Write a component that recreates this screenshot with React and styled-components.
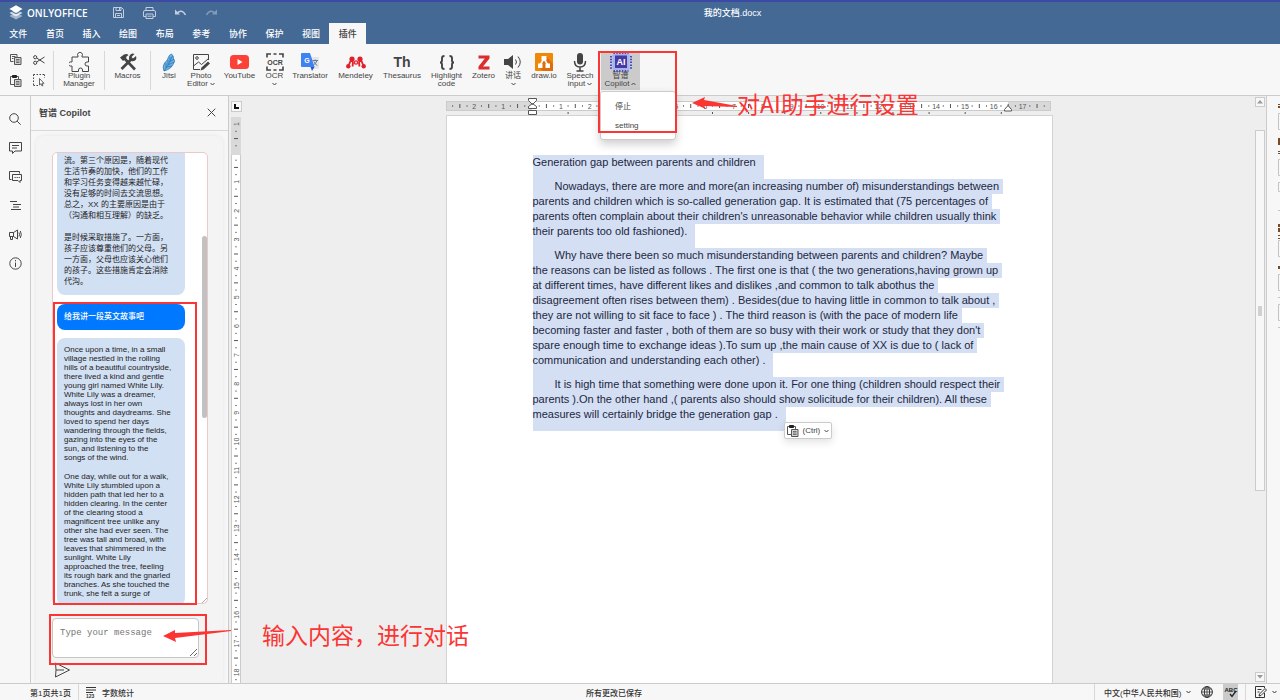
import styled, { createGlobalStyle, css } from "styled-components";

const theme = {
  header: "#446995",
  bar: "#f7f7f7",
  canvas: "#eeeeee",
  border: "#cbcbcb",
  text: "#444444",
  bubble: "#d2e0f4",
  primary: "#0078ff",
  selection: "#d4dff4",
  mark: "#fb3434",
  sans: '"Liberation Sans", "Noto Sans CJK SC", sans-serif',
  cjk: '"Noto Sans CJK SC", sans-serif',
};

const GlobalStyle = createGlobalStyle`
  * {
    box-sizing: border-box;
  }

  body {
    margin: 0;
    font-family: ${theme.sans};
    color: ${theme.text};
    background: ${theme.canvas};
  }

  button {
    font: inherit;
    color: inherit;
    border: 0;
    padding: 0;
    background: none;
    cursor: pointer;
  }

  svg {
    display: block;
    flex: none;
  }
`;

const StyledApp = styled.div`
  position: relative;
  display: flex;
  flex-direction: column;
  height: 100vh;
  overflow: hidden;
`;

/* ---------- header ---------- */

const StyledHeader = styled.header`
  background: ${theme.header};
  border-top: 2px solid #3c4aa6;
  color: #fff;
  font-size: 9px;
  font-weight: 500;
`;

const StyledTitleRow = styled.div`
  display: flex;
  align-items: center;
  height: 21px;
  padding-left: 9px;
`;

const StyledBrand = styled.a`
  display: flex;
  align-items: center;
  gap: 4px;
  width: 94px;
  color: #fff;
  text-decoration: none;
  font-family: "Open Sans", sans-serif;
  font-size: 10px;
  font-weight: 600;
`;

const StyledQuickActions = styled.div`
  display: flex;
  width: 124px;
  color: #c3cfde;

  button {
    display: grid;
    place-items: center;
    width: 31px;
    height: 20px;
  }
`;

const StyledDocName = styled.h1`
  flex: 1;
  margin: 0;
  padding-right: 42px;
  text-align: center;
  font-size: 9px;
  font-weight: 500;
`;

const StyledTabs = styled.nav`
  display: grid;
  grid-template-columns: repeat(10, 1fr);
  width: 366px;
  height: 21px;
`;

const StyledTab = styled.button`
  text-align: center;
  font-size: 9px;
  line-height: 20px;
  font-weight: 500;

  ${({ $active }) =>
    $active &&
    css`
      color: ${theme.text};
      background: ${theme.bar};
    `}
`;

/* ---------- toolbar ---------- */

const StyledToolbar = styled.div`
  display: flex;
  height: 52px;
  background: ${theme.bar};
  border-bottom: 1px solid ${theme.border};
`;

const StyledClipboard = styled.div`
  display: grid;
  grid-template-columns: 23px 23px;
  grid-template-rows: 21px 21px;
  padding: 5px 3px 0 4px;

  button {
    display: grid;
    place-items: center;
  }
`;

const StyledDivider = styled.i`
  width: 1px;
  height: 39px;
  margin-top: 7px;
  background: #d8d8d8;
`;

const StyledTool = styled.button`
  display: flex;
  flex-direction: column;
  align-items: center;
  width: ${({ $width }) => $width}px;
  height: 38px;
  margin-top: 8px;
  font-size: 8px;
  line-height: 8px;
  white-space: nowrap;
  background: ${({ $open }) => ($open ? "#cbcbcb" : "none")};

  .label {
    display: flex;
    align-items: center;
    gap: 2px;
    height: 8px;
  }
`;

const StyledToolIcon = styled.span`
  display: grid;
  place-items: center;
  height: 20px;
  font-size: 14px;
  font-weight: 700;
`;

const StyledMenuAnchor = styled.div`
  position: relative;
  margin-left: 5px;
`;

const StyledMenu = styled.div`
  position: absolute;
  z-index: 2;
  top: 47px;
  left: -1px;
  display: flex;
  flex-direction: column;
  width: 76px;
  padding: 3px 0 4px;
  background: #fff;
  border: 1px solid ${theme.border};
  border-radius: 3px;
  box-shadow: 0 4px 10px rgba(0, 0, 0, 0.2);

  button {
    height: 20px;
    padding-left: 14px;
    text-align: left;
    font-size: 8px;
  }
`;

/* ---------- body ---------- */

const StyledBody = styled.main`
  display: flex;
  flex: 1;
  min-height: 0;
`;

const StyledRail = styled.aside`
  display: flex;
  flex-direction: column;
  width: 31px;
  padding-top: 8px;
  background: ${theme.bar};
  border-right: 1px solid ${theme.border};

  button {
    display: grid;
    place-items: center;
    height: 29px;
  }
`;

const StyledPanel = styled.section`
  display: flex;
  flex-direction: column;
  width: 198px;
  background: ${theme.bar};
  border-right: 1px solid ${theme.border};
`;

const StyledPanelHeader = styled.div`
  display: flex;
  align-items: center;
  justify-content: space-between;
  height: 35px;
  padding: 0 12px 1px 8px;
  border-bottom: 1px solid #d8d8d8;

  h2 {
    margin: 0;
    font-size: 9px;
    font-weight: 700;
  }
`;

const StyledCard = styled.div`
  flex: 1;
  min-height: 0;
  margin: 5px 5px 0;
  padding: 16px 15px 0 16px;
  background: #f4f4f4;
  border-radius: 8px 8px 0 0;
  box-shadow: 0 0 4px rgba(0, 0, 0, 0.08);
`;

const StyledChat = styled.div`
  display: flex;
  height: 452px;
  background: #fff;
  border: 1px solid #ecc9c9;
  border-radius: 5px;
  overflow: hidden;
`;

const StyledMessages = styled.div`
  display: flex;
  flex: 1;
  flex-direction: column;
  align-items: flex-start;
  gap: 8px;
  padding-left: 4px;
  overflow: hidden;
`;

const StyledBubble = styled.div`
  flex: none;
  width: 128px;
  padding: 7px 0 8px 7px;
  border-radius: 8px;
  background: ${theme.bubble};
  color: #222;
  font-size: 8px;
  line-height: 9px;
  white-space: pre;

  p {
    margin: 0;
  }

  p + p {
    margin-top: 10px;
  }

  ${({ $variant }) =>
    $variant === "chinese" &&
    css`
      padding-top: 2px;
      margin-bottom: 1px;
      border-radius: 0 0 8px 8px;
      line-height: 11px;

      p + p {
        margin-top: 11px;
      }
    `}

  ${({ $variant }) =>
    $variant === "user" &&
    css`
      background: ${theme.primary};
      color: #fff;
      font-weight: 500;
      line-height: 11px;
    `}
`;

const StyledScrollTrack = styled.div`
  display: flex;
  flex-direction: column;
  justify-content: space-between;
  align-items: flex-end;
  width: 6px;
  padding-top: 83px;

  i {
    width: 5px;
    height: 182px;
    border-radius: 3px;
    background: #c1c1c1;
  }
`;

const StyledMessageBox = styled.textarea`
  display: block;
  width: 147px;
  height: 40px;
  margin-top: 14px;
  padding: 8px 7px;
  border: 1px solid #c6c6c6;
  border-radius: 4px;
  background: #fff;
  font-family: "Liberation Mono", monospace;
  font-size: 9px;
  line-height: 12px;

  &::placeholder {
    color: #757575;
  }
`;

const StyledSend = styled.button`
  display: block;
  margin: 4px 0 0 2px;
`;

/* ---------- document ---------- */

const StyledVerticalRuler = styled.div`
  display: flex;
  flex-direction: column;
  align-items: center;
  gap: 5px;
  width: 14px;
  padding-top: 5px;
  overflow: hidden;
`;

const StyledTabStop = styled.button`
  display: grid;
  flex: none;
  place-items: center;
  width: 11px;
  height: 11px;
  border: 1px solid ${theme.border};
  background: ${theme.bar};
`;

const StyledWorkspace = styled.div`
  display: flex;
  flex: 1;
  flex-direction: column;
  align-items: center;
  min-width: 0;
  padding: 4px 0 0;
`;

const StyledRulerSvg = styled.svg`
  overflow: visible;
`;

const StyledPage = styled.article`
  flex: 1;
  width: 607px;
  padding: 39px 0 0 86px;
  background: #fff;
  border: 1px solid #d3d3d3;
  border-bottom: 0;
`;

const StyledParagraph = styled.p`
  margin: 0;
  color: #1c2740;
  font-size: 11px;
  line-height: 15px;
  white-space: pre;
`;

const StyledLine = styled.span`
  display: block;
  width: fit-content;
  padding-right: 4px;
  background: ${theme.selection};

  &:first-child {
    padding-left: ${({ $indent }) => ($indent ? 22 : 0)}px;
  }

  &:last-child {
    padding-right: 8px;
    padding-bottom: 9px;
  }
`;

const StyledPasteAnchor = styled.div`
  position: relative;
`;

const StyledPaste = styled.button`
  position: absolute;
  top: -9px;
  left: 251px;
  display: flex;
  align-items: center;
  gap: 4px;
  height: 17px;
  padding: 0 2px;
  border: 1px solid ${theme.border};
  border-radius: 2px;
  background: #fff;
  box-shadow: 0 3px 8px rgba(0, 0, 0, 0.12);
  font-size: 8px;
`;

const StyledScroll = styled.div`
  display: flex;
  flex-direction: column;
  justify-content: space-between;
  width: 12px;
  padding: 1px 1px 1px 0;
  border-right: 1px solid ${theme.border};

  button {
    display: grid;
    place-items: center;
    width: 10px;
    height: 10px;
    border: 1px solid ${theme.border};
    background: ${theme.bar};
  }
`;

const StyledThumb = styled.div`
  display: grid;
  place-items: center;
  flex: 0 0 361px;
  width: 10px;
  margin: 23px 0 auto;
  border: 1px solid ${theme.border};
  background: ${theme.bar};

  i {
    width: 4px;
    height: 10px;
    background: #d0d0d0;
  }
`;

const StyledSettings = styled.aside`
  width: 13px;
  background: ${theme.bar};
  overflow: hidden;
`;

/* ---------- status bar ---------- */

const StyledStatus = styled.footer`
  display: flex;
  align-items: center;
  height: 17px;
  padding-left: 30px;
  background: ${theme.bar};
  border-top: 1px solid ${theme.border};
  font-size: 8px;
  font-weight: 500;
  color: #333;

  .saved {
    flex: 1;
    padding-right: 36px;
    text-align: center;
  }
`;

const StyledStatusItem = styled.button`
  display: flex;
  align-items: center;
  justify-content: ${({ $center }) => ($center ? "center" : "flex-start")};
  gap: 5px;
  width: ${({ $width }) => $width}px;
  height: 16px;
  margin-left: ${({ $before }) => $before || 0}px;
  padding-left: ${({ $pad }) => $pad || 0}px;
  border-left: ${({ $line }) => ($line ? "1px solid #d8d8d8" : 0)};
  background: ${({ $on }) => ($on ? "#cbcbcb" : "none")};
`;

/* ---------- callouts ---------- */

const StyledFrame = styled.div`
  position: absolute;
  z-index: 3;
  top: ${({ $top }) => $top}px;
  left: ${({ $left }) => $left}px;
  width: ${({ $width }) => $width}px;
  height: ${({ $height }) => $height}px;
  border: 2px solid ${theme.mark};
  pointer-events: none;
`;

const StyledNote = styled.div`
  position: absolute;
  z-index: 3;
  top: ${({ $top }) => $top}px;
  left: ${({ $left }) => $left}px;
  display: flex;
  align-items: center;
  gap: ${({ $gap }) => $gap || 0}px;
  color: ${theme.mark};
  font-family: ${theme.cjk};
  font-size: 23px;
  line-height: 30px;
  white-space: nowrap;
  pointer-events: none;
`;

/* ---------- icons ---------- */

const Icon = ({ w = 12, h = w, children, ...rest }) => (
  <svg
    width={w}
    height={h}
    viewBox={`0 0 ${w} ${h}`}
    fill="none"
    stroke="currentColor"
    aria-hidden="true"
    {...rest}
  >
    {children}
  </svg>
);

const Chevron = ({ up }) => (
  <Icon w={5} h={4}>
    <path d={up ? "M.5 3l2-2 2 2" : "M.5 1l2 2 2-2"} />
  </Icon>
);

const LogoIcon = () => (
  <Icon w={14} h={15} stroke="none" fill="#fff">
    <path d="M7 7.6 13.6 11 7 14.6.4 11z" opacity=".5" />
    <path d="M7 4.6 13.6 8 7 11.4.4 8z" opacity=".75" />
    <path d="M7 .3 13.6 3.9 7 7.8.4 3.9z" />
    <path d="M.4 4.6 7 8.3l6.6-3.7v.8L7 9.2.4 5.4z" fill={theme.header} />
  </Icon>
);

const SaveIcon = () => (
  <Icon w={11}>
    <path d="M.5.5h8l2 2v8H.5zM3 .5v3h5v-3M6.5 1v2M2.5 10.5v-4h6v4M4 8.500h3" />
  </Icon>
);

const PrintIcon = () => (
  <Icon w={13} h={12}>
    <path d="M3 3.500v-3h7v3M3 9.500H.500V5q0-1.500 1.500-1.500h9q1.500 0 1.500 1.500v4.500H10M3 7h7v4.500H3zM4.500 9.200h4" />
  </Icon>
);

const UndoIcon = ({ flip }) => (
  <Icon w={11} h={7} transform={flip ? "scale(-1 1)" : undefined} opacity={flip ? 0.5 : 1}>
    <path d="M2 4Q7-.5 10.500 6" strokeWidth="1.5" />
    <path d="M0 .5v5h5z" fill="currentColor" stroke="none" />
  </Icon>
);

const CopyIcon = () => (
  <Icon w={12} h={11} stroke="#555">
    <path d="M3.500 7.500h-3v-7h6.500V3M2 2.500h3.500M2 4.500h1.500" />
    <path d="M4.500 3.500H11v7H4.500z" fill="#d4d4d4" />
    <path d="M6 5.500h3.500M6 7h3.500M6 8.500h3.500" strokeWidth=".8" />
  </Icon>
);

const PasteIcon = () => (
  <Icon w={12} stroke="#555">
    <path d="M4 9.500H.5v-8h8V4" />
    <path d="M2.500.5h4v2h-4z" fill="#222" stroke="#222" />
    <path d="M4.500 4.500H11v7H4.500z" fill="#d4d4d4" />
    <path d="M6 6.500h3.500M6 8h3.500M6 9.500h3.500" strokeWidth=".8" />
  </Icon>
);

const CutIcon = () => (
  <Icon w={12} h={10}>
    <circle cx="2.200" cy="2.200" r="1.600" />
    <circle cx="2.200" cy="7.800" r="1.600" />
    <path d="M3.600 3 11.500 8M3.600 7 11.500 2" />
  </Icon>
);

const SelectIcon = () => (
  <Icon w={12} h={13}>
    <path d="M.5.5h11M.5.5v11M11.500.5V4M.5 11.500H5" strokeDasharray="1.500 1.500" />
    <path d="M6.500 4.500v6.500l1.500-1.300 1 2.300 1-.500-1-2.200H11z" fill="#fff" stroke="#444" strokeWidth=".8" />
  </Icon>
);

const PuzzleIcon = () => (
  <Icon w={20}>
    <path d="M3 5h6V4a2.400 2.400 0 1 1 4 0v1h6.500v5H18a2 2 0 1 0 0 4h1.500v5.500h-6V18a2 2 0 1 0-4 0v1.500H3V14h-.8a2.100 2.100 0 1 1 0-4H3z" />
  </Icon>
);

const MacrosIcon = () => (
  <Icon w={18}>
    <path d="M5.500 5.500 16 16.500" strokeWidth="2.600" />
    <path d="M2.500 16 12 6.500" strokeWidth="2.600" />
    <path d="M1 4.500l4-3q3-1 4.500.5l-2 1.500L7 5.500 4 8z" fill="currentColor" stroke="none" />
    <path d="M15.500 1l-3 3L14 5.500 17 3q1 3-1 4.500-2 1.300-4 .2L10 6q-.5-3 1.500-4.500t4-.5z" fill="currentColor" stroke="none" />
  </Icon>
);

const JitsiIcon = () => (
  <Icon w={14} h={19} stroke="#1d6fae" strokeWidth=".7">
    <path d="M9.500 1Q12 3 11.500 5.500 14 8 11 11.500 9 16 2 18q-2-4 .5-8Q6 7 6.500 4 7 2 9.500 1z" fill="#6fb2e4" />
    <path d="M2 18Q7 12 10.500 3M4 15v-5M6 12V7M8 9V4M5 14l5-1M7 11.500l5-2.500M9 8l3-2" />
  </Icon>
);

const PhotoIcon = () => (
  <Icon w={18}>
    <path d="M8 16.500H1.500v-15h15V7M1.500 13l5-4 3 2.500L16 6" />
    <circle cx="5" cy="5" r="1.300" />
    <path d="M16 8.500l2 2-6.500 6-3 1 1-3z" fill="currentColor" stroke="none" />
  </Icon>
);

const YoutubeIcon = () => (
  <Icon w={19} h={14} stroke="none">
    <rect width="19" height="14" rx="3.500" fill="#fc4237" />
    <path d="M7.500 4v6l5-3z" fill="#fff" />
  </Icon>
);

const OcrIcon = () => (
  <Icon w={18} strokeWidth="1.600">
    <path d="M1 4.500V1h4M13 1h4v3.500M1 13.500V17h4M13 17h4v-3.500M7.500 1h3M7.500 17h3" />
    <text x="9" y="11.500" textAnchor="middle" fontSize="7" fontWeight="700" fill="currentColor" stroke="none">
      OCR
    </text>
  </Icon>
);

const TranslatorIcon = () => (
  <Icon w={18} stroke="none">
    <path d="M7 4h10q1 0 1 1v10q0 1-1 1h-5z" fill="#e4e6ea" />
    <path d="M1 0h8l4.500 14H1q-1 0-1-1V1q0-1 1-1z" fill="#3f83f3" />
    <path d="M9.500 14h4L11 18z" fill="#2a56c6" />
    <text x="6" y="9.500" textAnchor="middle" fontSize="7" fontWeight="700" fill="#fff">
      G
    </text>
    <path d="M11.500 7.500H17M14.200 6.500v1M16 7.500q-1 3-3.500 4.500M12.800 8.500q1 2.500 3.500 4" stroke="#56708f" strokeWidth=".9" />
  </Icon>
);

const MendeleyIcon = () => (
  <Icon w={20} h={13} stroke="none" fill="#e2202c">
    <circle cx="6" cy="3" r="2.600" />
    <circle cx="14" cy="3" r="2.600" />
    <circle cx="10" cy="6.500" r="2.200" />
    <circle cx="2.300" cy="10.200" r="2.200" />
    <circle cx="17.700" cy="10.200" r="2.200" />
    <circle cx="10" cy="6.500" r="1" fill="#f7f7f7" />
    <path d="M2.300 10.200 5 4M17.700 10.200 15 4M6 3.500q1.500 3 .5 7M14 3.500q-1.500 3-.5 7" stroke="#e2202c" strokeWidth="1.800" fill="none" />
  </Icon>
);

const BracesIcon = () => (
  <Icon w={16} h={15} strokeWidth="1.900">
    <path d="M5.500 1Q3 1 3 3v2.500q0 2-2 2 2 0 2 2V12q0 2 2.500 2M10.500 1Q13 1 13 3v2.500q0 2 2 2-2 0-2 2V12q0 2-2.500 2" />
  </Icon>
);

const ZoteroIcon = () => (
  <Icon w={12} h={15} stroke="none">
    <path d="M.5.5h11v3L5 11.500h6.500v3H.5v-3l6.300-8H.5z" fill="#dc2c2c" />
  </Icon>
);

const SpeakerIcon = () => (
  <Icon w={18} h={14}>
    <path d="M0 4h4l5-4v14l-5-4H0z" fill="currentColor" stroke="none" />
    <path d="M11.500 4.500q2 2.500 0 5M14 1.500q4.500 5.500 0 11" />
  </Icon>
);

const DrawioIcon = () => (
  <Icon w={18} stroke="none">
    <rect width="18" height="18" rx="1" fill="#f08705" />
    <path d="M11 3l7 8v7H8l-4-4z" fill="#df6c0c" />
    <path d="M9 6 5 12M9 6l4 6" stroke="#fff" strokeWidth="1.500" />
    <path d="M6.500 3h5v4.500h-5zM3 10.500h4.500V15H3zM10.500 10.500H15V15h-4.500z" fill="#fff" />
  </Icon>
);

const MicIcon = () => (
  <Icon w={14} h={19}>
    <rect x="4" y="0" width="6" height="11.500" rx="3" fill="currentColor" stroke="none" />
    <path d="M1.500 8q0 6 5.500 6t5.500-6M7 14v3.500M3.500 18h7" strokeWidth="1.500" />
  </Icon>
);

const ChipIcon = () => (
  <Icon w={22} h={20} stroke="none">
    <path d="M3.500 1h15M3.500 19h15" stroke="#4a4ac0" strokeWidth="2" strokeDasharray="1.500 1.300" />
    <path d="M1 4v13M21 4v13" stroke="#4a4ac0" strokeWidth="2" strokeDasharray="1.500 1.300" />
    <rect x="2.500" y="2" width="17" height="16" rx="1" fill="#9fb6f3" />
    <rect x="5" y="3.500" width="12" height="12.500" fill="#4838a0" />
    <text x="11" y="13" textAnchor="middle" fontSize="9" fontWeight="700" fill="#fff">
      AI
    </text>
  </Icon>
);

const SearchIcon = () => (
  <Icon w={12}>
    <circle cx="5" cy="5" r="4.300" />
    <path d="m8.200 8.200 3.500 3.500" />
  </Icon>
);

const CommentIcon = () => (
  <Icon w={13} h={12}>
    <path d="M.5.5h12V9H6l-2.500 2.500V9h-3zM3 3.500h7M3 6h5" />
  </Icon>
);

const ChatIcon = () => (
  <Icon w={13} h={12}>
    <path d="M2.500 8.500h-2v-8h10v2" />
    <path d="M3.500 3.500h9v6H11v2l-2-2H3.500z" />
    <path d="M5.500 6.500H11" strokeDasharray="1.200 .9" />
  </Icon>
);

const OutlineIcon = () => (
  <Icon w={11} h={9}>
    <path d="M0 .5h7M3 3.500h8M3 6h6M1 8.500h10" />
  </Icon>
);

const MegaphoneIcon = () => (
  <Icon w={13} h={11}>
    <path d="M.5 3.500h4l4-2.500v9l-4-2.500h-4zM4.500 3.500v4M1.500 7.500v3h2v-3M10 3.500q1 2 0 4M11.300 2q2 3.500 0 7" />
  </Icon>
);

const InfoIcon = () => (
  <Icon w={13}>
    <circle cx="6.500" cy="6.500" r="5.700" />
    <path d="M6.500 5.500V10M6.500 3v1.300" />
  </Icon>
);

const CloseIcon = () => (
  <Icon w={9}>
    <path d="m.7.7 7.600 7.600M8.300.7.7 8.300" />
  </Icon>
);

const SendIcon = () => (
  <Icon w={17} h={16}>
    <path d="M1.500 1l14 7-14 7 .5-7zM2 8h8" />
  </Icon>
);

const CountIcon = () => (
  <Icon w={11} h={11}>
    <path d="M0 .5h10M0 3h10M0 5.500h7" />
    <text x="0" y="11" fontSize="5" fontWeight="700" fill="currentColor" stroke="none">
      123
    </text>
  </Icon>
);

const GlobeIcon = () => (
  <Icon w={12}>
    <circle cx="6" cy="6" r="5.400" />
    <ellipse cx="6" cy="6" rx="2.600" ry="5.400" />
    <path d="M6 .5v11M.5 6h11M1.500 3h9M1.500 9h9" strokeWidth=".8" />
  </Icon>
);

const SpellIcon = () => (
  <Icon w={14} h={12}>
    <text x="7" y="6" textAnchor="middle" fontSize="6" fontWeight="700" fill="#222" stroke="none">
      ABC
    </text>
    <path d="m6 8 2 2.500L12 5" stroke="#222" strokeWidth="1.300" />
  </Icon>
);

const EditIcon = () => (
  <Icon w={12} h={12}>
    <path d="M9.500 7v4.500h-9V.5h9V2M2.500 3.500h4M2.500 6h2" />
    <path d="M10 2.500 11.500 4 6 9.500l-2 .5.5-2z" />
  </Icon>
);

/* ---------- rulers ---------- */

const CM = 28.86;

// one centimetre = dot, tick, dot, number
const rulerMarks = (from, to) => {
  const marks = [];
  for (let q = from; q <= to; q++) {
    if (q === 0) continue;
    const kind = q % 4 === 0 ? "number" : q % 2 === 0 ? "tick" : "dot";
    marks.push({ pos: (q * CM) / 4, kind, label: Math.abs(q / 4) });
  }
  return marks;
};

function HorizontalRuler() {
  const zero = 86;
  return (
    <StyledRulerSvg width="607" height="15" viewBox="0 0 607 15" aria-hidden="true">
      <rect x=".5" y="1.500" width="604" height="9" fill="#d9d9d9" stroke="#cbcbcb" />
      <rect x={zero} y="2" width="476" height="8" fill="#fff" />
      {rulerMarks(-11, 71).map(({ pos, kind, label }) => {
        const x = zero + pos;
        if (kind === "number") {
          return (
            <text key={pos} x={x} y="8.500" textAnchor="middle" fontSize="7" fill="#555">
              {label}
            </text>
          );
        }
        const half = kind === "tick" ? 2 : 0.7;
        return <path key={pos} d={`M${x} ${6 - half}V${6 + half}`} stroke="#555" />;
      })}
      {Array.from({ length: 13 }, (_, i) => (
        <path key={i} d={`M${zero + 36.1 * (i + 1)} 12v2`} stroke="#555" />
      ))}
      <path d="M82.500-1.500h8v2l-4 4-4-4zM82.500 8.500v-2l4-3 4 3v2zM82.500 10.500h8v4h-8z" fill="#fff" stroke="#555" />
      <path d="M558.500 11V9.500l3.500-4 3.500 4V11z" fill="#fff" stroke="#555" />
    </StyledRulerSvg>
  );
}

function VerticalRuler() {
  const zero = 36;
  return (
    <svg width="10" height="600" viewBox="0 0 10 600" aria-hidden="true">
      <rect x=".5" y="0" width="9" height="600" fill="#fff" stroke="#cbcbcb" />
      <rect x="0" y="0" width="10" height="38" fill="#d9d9d9" />
      {rulerMarks(-4, 75).map(({ pos, kind, label }) => {
        const y = zero + pos;
        if (kind === "number") {
          return (
            <text key={pos} transform={`translate(7.500 ${y}) rotate(-90)`} textAnchor="middle" fontSize="7" fill="#555">
              {label}
            </text>
          );
        }
        const half = kind === "tick" ? 2 : 0.7;
        return <path key={pos} d={`M${5 - half} ${y}H${5 + half}`} stroke="#555" />;
      })}
    </svg>
  );
}

/* ---------- data ---------- */

const tabs = ["文件", "首页", "插入", "绘图", "布局", "参考", "协作", "保护", "视图", "插件"];

const tools = [
  { width: 50, icon: <PuzzleIcon />, lines: ["Plugin", "Manager"], divider: true },
  { width: 45, icon: <MacrosIcon />, lines: ["Macros"], divider: true },
  { width: 36, icon: <JitsiIcon />, lines: ["Jitsi"] },
  { width: 28, icon: <PhotoIcon />, lines: ["Photo", "Editor"], arrow: true },
  { width: 49, icon: <YoutubeIcon />, lines: ["YouTube"] },
  { width: 21, icon: <OcrIcon />, lines: ["OCR", ""], arrow: true },
  { width: 50, icon: <TranslatorIcon />, lines: ["Translator"] },
  { width: 41, icon: <MendeleyIcon />, lines: ["Mendeley"] },
  { width: 52, icon: "Th", lines: ["Thesaurus"] },
  { width: 37, icon: <BracesIcon />, lines: ["Highlight", "code"] },
  { width: 37, icon: <ZoteroIcon />, lines: ["Zotero"] },
  { width: 22, icon: <SpeakerIcon />, lines: ["讲话", ""], arrow: true },
  { width: 40, icon: <DrawioIcon />, lines: ["draw.io"] },
  { width: 32, icon: <MicIcon />, lines: ["Speech", "input"], arrow: true },
];

const rail = [
  ["Search", <SearchIcon />],
  ["Comments", <CommentIcon />],
  ["Chat", <ChatIcon />],
  ["Navigation", <OutlineIcon />],
  ["Feedback", <MegaphoneIcon />],
  ["About", <InfoIcon />],
];

const messages = [
  {
    variant: "chinese",
    text: [
      "流。第三个原因是，随着现代\n生活节奏的加快，他们的工作\n和学习任务变得越来越忙碌，\n没有足够的时间去交流思想。\n总之，XX 的主要原因是由于\n（沟通和相互理解）的缺乏。",
      "是时候采取措施了。一方面，\n孩子应该尊重他们的父母。另\n一方面，父母也应该关心他们\n的孩子。这些措施肯定会消除\n代沟。",
    ],
  },
  { variant: "user", text: ["给我讲一段英文故事吧"] },
  {
    variant: "english",
    text: [
      "Once upon a time, in a small\nvillage nestled in the rolling\nhills of a beautiful countryside,\nthere lived a kind and gentle\nyoung girl named White Lily.\nWhite Lily was a dreamer,\nalways lost in her own\nthoughts and daydreams. She\nloved to spend her days\nwandering through the fields,\ngazing into the eyes of the\nsun, and listening to the\nsongs of the wind.",
      "One day, while out for a walk,\nWhite Lily stumbled upon a\nhidden path that led her to a\nhidden clearing. In the center\nof the clearing stood a\nmagnificent tree unlike any\nother she had ever seen. The\ntree was tall and broad, with\nleaves that shimmered in the\nsunlight. White Lily\napproached the tree, feeling\nits rough bark and the gnarled\nbranches. As she touched the\ntrunk, she felt a surge of",
    ],
  },
];

const paragraphs = [
  ["Generation gap between parents and children"],
  [
    "Nowadays, there are more and more(an increasing number of) misunderstandings between",
    "parents and children which is so-called generation gap. It is estimated that (75 percentages of",
    "parents often complain about their children's unreasonable behavior while children usually think",
    "their parents too old fashioned).",
  ],
  [
    "Why have there been so much misunderstanding between parents and children? Maybe",
    "the reasons can be listed as follows . The first one is that ( the two generations,having grown up",
    "at different times, have different likes and dislikes ,and common to talk abothus the",
    "disagreement often rises between them) . Besides(due to having little in common to talk about ,",
    "they are not willing to sit face to face ) . The third reason is (with the pace of modern life",
    "becoming faster and faster , both of them are so busy with their work or study that they don't",
    "spare enough time to exchange ideas ).To sum up ,the main cause of XX is due to ( lack of",
    "communication and understanding each other) .",
  ],
  [
    "It is high time that something were done upon it. For one thing (children should respect their",
    "parents ).On the other hand ,( parents also should show solicitude for their children). All these",
    "measures will certainly bridge the generation gap .",
  ],
];

/* ---------- parts ---------- */

function Tool({ width, icon, lines, arrow, up, open }) {
  return (
    <StyledTool $width={width} $open={open}>
      <StyledToolIcon>{icon}</StyledToolIcon>
      {lines.map((line, i) => (
        <span className="label" key={i}>
          {line}
          {arrow && i === lines.length - 1 && <Chevron up={up} />}
        </span>
      ))}
    </StyledTool>
  );
}

function Header() {
  return (
    <StyledHeader>
      <StyledTitleRow>
        <StyledBrand href="#">
          <LogoIcon />
          ONLYOFFICE
        </StyledBrand>
        <StyledQuickActions>
          <button aria-label="Save"><SaveIcon /></button>
          <button aria-label="Print"><PrintIcon /></button>
          <button aria-label="Undo"><UndoIcon /></button>
          <button aria-label="Redo"><UndoIcon flip /></button>
        </StyledQuickActions>
        <StyledDocName>我的文档.docx</StyledDocName>
      </StyledTitleRow>
      <StyledTabs>
        {tabs.map((tab) => (
          <StyledTab key={tab} $active={tab === "插件"}>{tab}</StyledTab>
        ))}
      </StyledTabs>
    </StyledHeader>
  );
}

function Toolbar() {
  return (
    <StyledToolbar>
      <StyledClipboard>
        <button aria-label="Copy"><CopyIcon /></button>
        <button aria-label="Cut"><CutIcon /></button>
        <button aria-label="Paste"><PasteIcon /></button>
        <button aria-label="Select all"><SelectIcon /></button>
      </StyledClipboard>
      <StyledDivider />
      {tools.map(({ divider, ...tool }) => [
        <Tool key={tool.lines[0]} {...tool} />,
        divider && <StyledDivider key={`${tool.lines[0]}-divider`} />,
      ])}
      <StyledMenuAnchor>
        <Tool width={39} icon={<ChipIcon />} lines={["智谱", "Copilot"]} arrow up open />
        <StyledMenu>
          <button>停止</button>
          <button>setting</button>
        </StyledMenu>
      </StyledMenuAnchor>
    </StyledToolbar>
  );
}

function CopilotPanel() {
  return (
    <StyledPanel>
      <StyledPanelHeader>
        <h2>智谱 Copilot</h2>
        <button aria-label="Close"><CloseIcon /></button>
      </StyledPanelHeader>
      <StyledCard>
        <StyledChat>
          <StyledMessages>
            {messages.map(({ variant, text }) => (
              <StyledBubble key={variant} $variant={variant}>
                {text.map((part) => (
                  <p key={part}>{part}</p>
                ))}
              </StyledBubble>
            ))}
          </StyledMessages>
          <StyledScrollTrack>
            <i />
            <Icon w={5} stroke="#999">
              <path d="M0 5l5-5M3 5l2-2" strokeWidth=".8" />
            </Icon>
          </StyledScrollTrack>
        </StyledChat>
        <StyledMessageBox aria-label="Message" placeholder="Type your message" />
        <StyledSend aria-label="Send"><SendIcon /></StyledSend>
      </StyledCard>
    </StyledPanel>
  );
}

function Document() {
  return (
    <StyledWorkspace>
      <HorizontalRuler />
      <StyledPage>
        {paragraphs.map((lines, p) => (
          <StyledParagraph key={p}>
            {lines.map((line) => (
              <StyledLine key={line} $indent={p > 0}>{line}</StyledLine>
            ))}
          </StyledParagraph>
        ))}
        <StyledPasteAnchor>
          <StyledPaste>
            <PasteIcon />
            (Ctrl)
            <Chevron />
          </StyledPaste>
        </StyledPasteAnchor>
      </StyledPage>
    </StyledWorkspace>
  );
}

// the settings column is cut by the window edge, only the field edges show
function SettingsEdge() {
  return (
    <StyledSettings>
      <svg width="13" height="240" viewBox="0 0 13 240" fill="none" stroke="#c4c4c4" aria-hidden="true">
        <path d="M14 17.500h-2.500v16H14M14 63.500h-2.500v16H14M14 86.500h-2.500v9H14M14 144.500h-2.500v16H14M14 178.500h-2.500v16H14M14 208.500h-2.500v16H14" />
        <path d="M11 114.500h2M11 201.500h2M11 231.500h2" />
        <path d="M12 8v1M12 10v2M12 42v7M12 55v1M12 57v1M12 128v3M12 132v4M12 139v1M12 142v1M12 170v3" stroke="#7b4a22" strokeWidth="2" />
      </svg>
    </StyledSettings>
  );
}

function StatusBar() {
  return (
    <StyledStatus>
      <StyledStatusItem $width={48}>第1页共1页</StyledStatusItem>
      <StyledStatusItem $line $pad={7} $width={92}>
        <CountIcon />
        字数统计
      </StyledStatusItem>
      <span className="saved">所有更改已保存</span>
      <StyledStatusItem $line $pad={9} $width={103}>
        中文(中华人民共和国)
        <Chevron />
      </StyledStatusItem>
      <StyledStatusItem $center $width={20} aria-label="Language"><GlobeIcon /></StyledStatusItem>
      <StyledStatusItem $center $on $before={6} $width={15} aria-label="Spell check"><SpellIcon /></StyledStatusItem>
      <StyledStatusItem $line $before={7} $pad={9} $width={35} aria-label="Track changes">
        <EditIcon />
        <Chevron />
      </StyledStatusItem>
    </StyledStatus>
  );
}

function Callouts() {
  return (
    <>
      <StyledFrame $left={598} $top={51} $width={79} $height={82} />
      <StyledFrame $left={53} $top={302} $width={144} $height={303} />
      <StyledFrame $left={49} $top={614} $width={158} $height={51} />
      <StyledNote $left={692} $top={88}>
        <Icon w={45} h={20} stroke="none" fill={theme.mark}>
          <path d="M0 10 13 4l-1 3 33 6v1l-33-1 2 3z" />
        </Icon>
        对AI助手进行设置
      </StyledNote>
      <StyledNote $left={163} $top={619} $gap={31}>
        <Icon w={68} h={18} stroke="none" fill={theme.mark}>
          <path d="M0 11 12 5v3l56-3v1l-56 7 1 4z" />
        </Icon>
        输入内容，进行对话
      </StyledNote>
    </>
  );
}

export default function App() {
  return (
    <StyledApp>
      <GlobalStyle />
      <Header />
      <Toolbar />
      <StyledBody>
        <StyledRail>
          {rail.map(([name, icon]) => (
            <button key={name} aria-label={name}>{icon}</button>
          ))}
        </StyledRail>
        <CopilotPanel />
        <StyledVerticalRuler>
          <StyledTabStop aria-label="Tab stop">
            <Icon w={5} strokeWidth="2" stroke="#111">
              <path d="M1 0v4h4" />
            </Icon>
          </StyledTabStop>
          <VerticalRuler />
        </StyledVerticalRuler>
        <Document />
        <StyledScroll>
          <button aria-label="Scroll up">
            <Icon w={6} h={4} stroke="none" fill="#999"><path d="M3 0l3 3.500H0z" /></Icon>
          </button>
          <StyledThumb><i /></StyledThumb>
          <button aria-label="Scroll down">
            <Icon w={6} h={4} stroke="none" fill="#999"><path d="M0 0h6L3 3.500z" /></Icon>
          </button>
        </StyledScroll>
        <SettingsEdge />
      </StyledBody>
      <StatusBar />
      <Callouts />
    </StyledApp>
  );
}
